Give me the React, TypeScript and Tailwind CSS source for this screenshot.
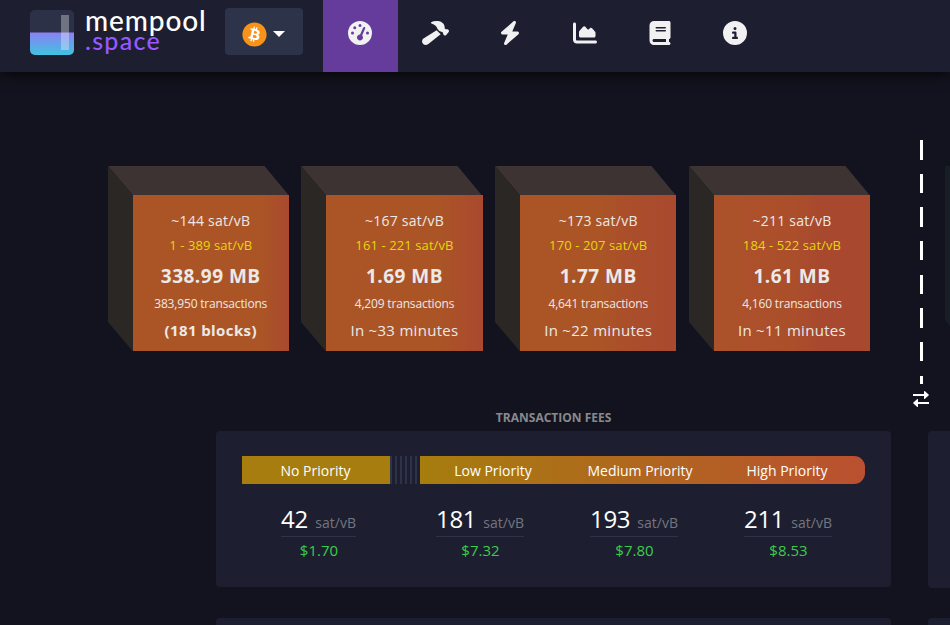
import {
  FaBolt,
  FaBook,
  FaChartArea,
  FaCircleInfo,
  FaGaugeHigh,
} from 'react-icons/fa6';
import { FaBitcoin } from 'react-icons/fa';

function HammerIcon({ className }: { className?: string }) {
  return (
    <svg viewBox="0 0 27 24" fill="currentColor" className={className}>
      <path d="M9.2 1.2Q12-.2 16 0Q21.4.8 22.5 5L22.8 7.4Q24 8.6 25 8.2Q26 7.9 26.8 9.2Q27.2 10.3 26.5 11.2L24.2 14Q23.3 14.9 22.2 14.2Q20.8 13 21 11.6L19.4 10.8Q16.8 10.3 15.4 7.8Q14.8 4 9.4 2.4Q8.6 1.9 9.2 1.2z" />
      <path d="M14.6 9.2L18.6 13.3L6.4 22.9Q3.5 25 1.2 23Q-1 20.5 1.1 17.8z" />
    </svg>
  );
}

const navItems = [
  { id: 'dashboard', Icon: FaGaugeHigh, active: true },
  { id: 'mining', Icon: HammerIcon },
  { id: 'lightning', Icon: FaBolt },
  { id: 'graphs', Icon: FaChartArea },
  { id: 'docs', Icon: FaBook },
  { id: 'about', Icon: FaCircleInfo },
];

const blocks = [
  {
    median: '~144 sat/vB',
    range: '1 - 389 sat/vB',
    size: '338.99 MB',
    txs: '383,950 transactions',
    eta: '(181 blocks)',
    stack: true,
    face: 'bg-[linear-gradient(to_right,#ab5526_82%,#a9492f_100%)]',
  },
  {
    median: '~167 sat/vB',
    range: '161 - 221 sat/vB',
    size: '1.69 MB',
    txs: '4,209 transactions',
    eta: 'In ~33 minutes',
    face: 'bg-[linear-gradient(to_right,#ab5526_70%,#a9492f_100%)]',
  },
  {
    median: '~173 sat/vB',
    range: '170 - 207 sat/vB',
    size: '1.77 MB',
    txs: '4,641 transactions',
    eta: 'In ~22 minutes',
    face: 'bg-[linear-gradient(to_right,#ab5526_50%,#aa4e2b_70%,#a9492f_100%)]',
  },
  {
    median: '~211 sat/vB',
    range: '184 - 522 sat/vB',
    size: '1.61 MB',
    txs: '4,160 transactions',
    eta: 'In ~11 minutes',
    face: 'bg-[linear-gradient(to_right,#ac522a_0%,#ab4f2b_50%,#a8482e_68%)]',
  },
];

const fees = [
  { rate: '42', fiat: '$1.70', box: 'w-[75px] mr-[14px]' },
  { rate: '181', fiat: '$7.32', box: 'w-[88px]' },
  { rate: '193', fiat: '$7.80', box: 'w-[88px]' },
  { rate: '211', fiat: '$8.53', box: 'w-[88px]' },
];

function LogoMark() {
  return (
    <svg width="44" height="45" viewBox="0 0 44 45" className="block shrink-0">
      <defs>
        <linearGradient id="logoFill" x1="0" y1="0" x2="0" y2="1">
          <stop offset="0" stopColor="#8b80f3" />
          <stop offset="1" stopColor="#3fc4e0" />
        </linearGradient>
        <clipPath id="logoClip">
          <rect width="44" height="45" rx="5" />
        </clipPath>
      </defs>
      <g clipPath="url(#logoClip)">
        <rect width="44" height="45" fill="#2d3148" />
        <rect y="22.5" width="44" height="22.5" fill="url(#logoFill)" />
        <rect x="31" y="5" width="8" height="35" fill="#fff" opacity="0.32" />
      </g>
    </svg>
  );
}

function Header() {
  return (
    <header className="flex h-[72px] bg-[#1d1f31] pl-[30px] shadow-[0_0_15px_0_#000]">
      <div className="flex w-[195px] gap-[11px] pt-[10px]">
        <LogoMark />
        <div className="font-[Lato,'Open_Sans',sans-serif] font-medium whitespace-nowrap">
          <div className="h-5 text-[28px] leading-5 tracking-[0.9px] text-white">mempool</div>
          <div className="h-[21px] text-[25px] leading-[21px] tracking-[1.3px] text-[#9857ff]">.space</div>
        </div>
      </div>
      <button className="mt-2 mr-5 flex h-[47px] w-[78px] items-center rounded bg-[#2d3348] pt-[5px] pl-[17px]">
        <span className="rounded-full bg-[radial-gradient(#fff_50%,transparent_52%)]">
          <FaBitcoin className="size-[25px] text-[#f7931a]" />
        </span>
        <svg width="12" height="6" viewBox="0 0 12 6" className="ml-[6px]">
          <path d="M0 0h12L6 6z" fill="#fff" />
        </svg>
      </button>
      <nav className="flex">
        {navItems.map(({ id, Icon, active }) => (
          <a
            key={id}
            className={`flex w-[75px] justify-center pt-[21px] pr-px text-[#f1f1f1] ${active ? 'bg-[#653b9c]' : ''}`}
          >
            <Icon className="h-6 w-auto" />
          </a>
        ))}
      </nav>
    </header>
  );
}

function MempoolBlock({ block }: { block: (typeof blocks)[number] }) {
  return (
    <div className="grid shrink-0">
      <svg width="182" height="186" viewBox="0 0 182 186" className="[grid-area:1/1]">
        <path d="M0 0H156.5L181 29.5H25z" fill="#3c3332" />
        <path d="M0 0L25 29.5V185.4L0 156z" fill="#2a2724" />
      </svg>
      <div
        className={`mt-[29.4px] ml-[25px] flex h-[155.9px] w-[156.25px] flex-col items-center pt-[13.8px] whitespace-nowrap text-[#ebe9e9] [grid-area:1/1] ${block.face}`}
      >
        <div className="h-6 text-[14px] leading-6 tracking-[0.25px]">{block.median}</div>
        <div className="h-6 text-[13px] leading-6 tracking-[0.1px] text-[#e6d70c]">{block.range}</div>
        <div className="mt-px h-9 text-[19px] leading-9 font-bold tracking-[0.5px]">{block.size}</div>
        <div className="h-5 text-[12px] leading-5 tracking-[-0.17px]">{block.txs}</div>
        <div
          className={`h-8 text-[15px] leading-[33px] ${block.stack ? 'font-bold tracking-[0.4px]' : 'tracking-[0.3px]'}`}
        >
          {block.eta}
        </div>
      </div>
    </div>
  );
}

function Divider() {
  return (
    <div className="ml-[42px] flex h-[268px] w-4 shrink-0 flex-col self-start">
      <div className="ml-[7.2px] h-[244px] w-[3px] bg-[repeating-linear-gradient(to_bottom,#fff_0,#fff_19.5px,transparent_19.5px,transparent_33.65px)]" />
      <svg width="16" height="16" viewBox="0 0 16 16" className="mt-[7px]" fill="#fff">
        <path d="M0 3h11V.6Q11-.4 12 .3L15.6 3.6Q16 4 15.6 4.4L12 7.7Q11 8.4 11 7.4V5H0z" />
        <path d="M16 11H5V8.6Q5 7.6 4 8.3L.4 11.6Q0 12 .4 12.4L4 15.7Q5 16.4 5 15.4V13H16z" />
      </svg>
    </div>
  );
}

function FeesCard() {
  return (
    <div className="h-[156px] rounded bg-[#1d1f31] pt-[25.4px] pl-[25.6px]">
      <div className="flex h-7 w-[623px] text-center text-[14px] leading-[29px] text-white">
        <div className="w-[148px] bg-[#a67d0e] pr-px">No Priority</div>
        <div className="w-[30px] bg-[repeating-linear-gradient(to_right,#2d3348_0,#2d3348_2px,transparent_2px,transparent_5px)]" />
        <div className="flex w-[445px] rounded-r-[11px] bg-[linear-gradient(to_right,#a67d0e,#ba5030)]">
          <span className="w-[147px] pr-px">Low Priority</span>
          <span className="w-[147px] pr-px">Medium Priority</span>
          <span className="w-[147px] pr-px">High Priority</span>
        </div>
      </div>
      <div className="mt-[17px] flex gap-[66px] pl-[39px] whitespace-nowrap">
        {fees.map((fee) => (
          <div key={fee.rate} className={`text-center ${fee.box}`}>
            <div className="flex h-9 items-baseline justify-between border-b border-[#2d3348] text-[24px] leading-9 tracking-[-0.3px] text-white">
              {fee.rate}
              <span className="text-[14px] tracking-normal text-[#74757f]">sat/vB</span>
            </div>
            <div className="pl-px text-[15px] leading-[27px] text-[#3bcc49]">{fee.fiat}</div>
          </div>
        ))}
      </div>
    </div>
  );
}

export default function App() {
  return (
    <div className="h-[625px] w-[950px] overflow-hidden bg-[#12131e] font-['Open_Sans','Noto_Sans',sans-serif]">
      <Header />
      <section className="flex h-[338px] items-start overflow-hidden pt-[68px] pl-[107.6px]">
        <div className="flex gap-[11.75px] pt-[26px]">
          {blocks.map((block) => (
            <MempoolBlock key={block.median} block={block} />
          ))}
        </div>
        <Divider />
        <svg width="5" height="160" viewBox="0 0 5 160" className="mt-[26px] ml-[16px] shrink-0">
          <path d="M0 0H5V160L0 154z" fill="#171e26" />
        </svg>
      </section>
      <main className="flex gap-[37.6px] overflow-hidden pl-[216.4px]">
        <div className="w-[674.4px] shrink-0">
          <h2 className="h-[20.6px] text-center text-[12px] leading-4 font-bold text-[#88898f]">
            TRANSACTION FEES
          </h2>
          <FeesCard />
          <div className="mt-[31.4px] h-10 rounded bg-[#1d1f31]" />
        </div>
        <div className="w-[674px] shrink-0 pt-[20.6px]">
          <div className="h-[157px] rounded bg-[#1d1f31]" />
          <div className="mt-[30.4px] h-10 rounded bg-[#1d1f31]" />
        </div>
      </main>
    </div>
  );
}
